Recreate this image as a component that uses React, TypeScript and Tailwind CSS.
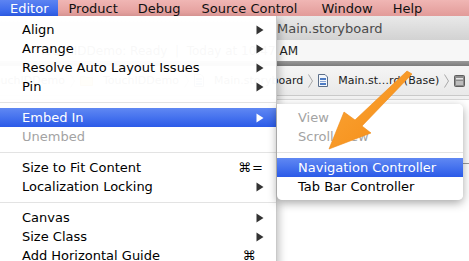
import React from "react";

type Item =
  | { kind: "item"; label: string; sub?: boolean; key?: string; on?: boolean; off?: boolean }
  | { kind: "sep" };

const EDITOR_MENU: Item[] = [
  { kind: "item", label: "Align", sub: true },
  { kind: "item", label: "Arrange", sub: true },
  { kind: "item", label: "Resolve Auto Layout Issues", sub: true },
  { kind: "item", label: "Pin", sub: true },
  { kind: "sep" },
  { kind: "item", label: "Embed In", sub: true, on: true },
  { kind: "item", label: "Unembed", off: true },
  { kind: "sep" },
  { kind: "item", label: "Size to Fit Content", key: "⌘=" },
  { kind: "item", label: "Localization Locking", sub: true },
  { kind: "sep" },
  { kind: "item", label: "Canvas", sub: true },
  { kind: "item", label: "Size Class", sub: true },
  { kind: "item", label: "Add Horizontal Guide", key: "⌘_" },
];

const EMBED_MENU: Item[] = [
  { kind: "item", label: "View", off: true },
  { kind: "item", label: "Scroll View", off: true },
  { kind: "sep" },
  { kind: "item", label: "Navigation Controller", on: true },
  { kind: "item", label: "Tab Bar Controller" },
];

const BAR = ["Editor", "Product", "Debug", "Source Control", "Window", "Help"];

function Tri({ white }: { white?: boolean }) {
  return (
    <svg width="8" height="10" viewBox="0 0 8 10" className="shrink-0">
      <path d="M0.5 0.5 L7.5 5 L0.5 9.5 Z" fill={white ? "#ffffff" : "#333333"} />
    </svg>
  );
}

function MenuRows({ items, pl }: { items: Item[]; pl: string }) {
  return (
    <>
      {items.map((it, i) =>
        it.kind === "sep" ? (
          <div key={i} className="h-[12px] flex items-center">
            <div className="h-px w-full bg-[#e3e3e3]" />
          </div>
        ) : (
          <div
            key={i}
            className={`h-[19px] flex items-center ${pl} pr-[12px] ${
              it.on ? "bg-gradient-to-b from-[#6088f3] to-[#2b5ae8] text-white" : it.off ? "text-[#a3a3a3]" : "text-black"
            }`}
          >
            <span className="flex-1 whitespace-nowrap">{it.label}</span>
            {it.sub && <Tri white={it.on} />}
            {it.key && <span className="whitespace-nowrap tracking-[1px]">{it.key}</span>}
          </div>
        )
      )}
    </>
  );
}

function FileIcon() {
  return (
    <svg width="10" height="13" viewBox="0 0 10 13" className="shrink-0">
      <path d="M0.5 0.5 H7 L9.5 3 V12.5 H0.5 Z" fill="#f4f7fb" stroke="#5c6f8a" />
      <rect x="2" y="4" width="6" height="2" fill="#4d7cc4" />
      <rect x="2" y="7" width="6" height="1" fill="#8aa6d6" />
      <rect x="2" y="9" width="6" height="2" fill="#4d7cc4" />
    </svg>
  );
}

function SceneIcon() {
  return (
    <svg width="11" height="12" viewBox="0 0 11 12" className="shrink-0">
      <rect x="0.5" y="0.5" width="10" height="11" rx="1" fill="#8c8c8c" stroke="#5e5e5e" />
      <rect x="2" y="3" width="7" height="1.5" fill="#e6e6e6" />
      <rect x="2" y="6" width="7" height="4" fill="#bdbdbd" />
    </svg>
  );
}

function FolderIcon() {
  return (
    <svg width="13" height="11" viewBox="0 0 13 11" className="shrink-0">
      <path d="M0.5 1.5 H5 L6 2.5 H12.5 V10.5 H0.5 Z" fill="#f2cf6a" stroke="#c99a2e" />
    </svg>
  );
}

function Crumb({ icon, label }: { icon?: React.ReactNode; label: string }) {
  return (
    <div className="flex items-center gap-[10px] shrink-0">
      {icon}
      <span className="shrink-0">{label}</span>
    </div>
  );
}

function Chev() {
  return (
    <svg width="5" height="14" viewBox="0 0 5 14" className="shrink-0 mx-[5px]">
      <path d="M0.5 0.5 L4.5 7 L0.5 13.5" fill="none" stroke="#a8a8a8" strokeWidth="1" />
    </svg>
  );
}

export default function App() {
  return (
    <div
      className="relative w-[469px] h-[261px] overflow-hidden bg-white text-[13px] leading-none"
      style={{ fontFamily: '"DejaVu Sans", "Liberation Sans", sans-serif' }}
    >
      {/* menu bar */}
      <div className="h-[16px] flex items-stretch bg-gradient-to-b from-[#f0b6b4] to-[#e29b99] text-[#111]">
        {BAR.map((b, i) => (
          <div
            key={b}
            className={`flex items-center px-[10px] whitespace-nowrap ${
              i === 0 ? "bg-gradient-to-b from-[#5d84f2] to-[#2e5de9] text-white" : ""
            } ${i === 3 ? "pl-[11px]" : ""} ${i === 4 ? "pl-[14px]" : ""}`}
          >
            {b}
          </div>
        ))}
      </div>

      {/* background Xcode window */}
      <div className="flex flex-col text-[12px]">
        <div className="h-[24px] flex items-center pl-[277px] bg-gradient-to-b from-[#e9e9e9] to-[#d2d2d2] text-[#4a4a4a] text-[13px]">
          Main.storyboard
        </div>
        <div className="h-[21px] flex items-center bg-[#f7f7f7] text-[#222]">
          <div className="w-[298px] text-right whitespace-nowrap">TouchIDDemo: Ready&nbsp;&nbsp;|&nbsp;&nbsp;Today at 10:47 AM</div>
        </div>
        <div className="h-[5px] bg-gradient-to-b from-[#9a9a9a] to-[#7c7c7c]" />
        <div className="h-[30px] flex items-center ml-[-11px] bg-gradient-to-b from-[#f5f5f5] to-[#e9e9e9] text-[11px] text-[#1b1b1b] whitespace-nowrap border-b border-[#c9c9c9] overflow-hidden">
          <Crumb label="TouchIDDemo" />
          <Chev />
          <Crumb icon={<FolderIcon />} label="TouchIDDemo" />
          <Chev />
          <Crumb icon={<FileIcon />} label="Main.storyboard" />
          <Chev />
          <Crumb icon={<FileIcon />} label="Main.st…rd (Base)" />
          <Chev />
          <Crumb icon={<SceneIcon />} label="View Controller Scene" />
        </div>
        <div className="h-[4px] bg-[#f1f1f1] border-b border-[#d8d8d8]" />
        <div className="flex-1 flex justify-end pt-[63px]">
          <div className="w-[8px] h-px bg-[#9a9a9a]" />
        </div>
      </div>

      {/* Editor menu */}
      <div className="absolute left-0 top-[16px] w-[277px] pt-[4px] pb-[4px] bg-white/[0.97] border-r border-[#c9c9c9] shadow-[2px_3px_8px_rgba(0,0,0,0.25)]">
        <MenuRows items={EDITOR_MENU} pl="pl-[22px]" />
      </div>

      {/* Embed In submenu */}
      <div className="absolute left-[277px] top-[104px] w-[186px] py-[4px] bg-white/[0.97] rounded-[5px] rounded-tl-none shadow-[0_3px_10px_rgba(0,0,0,0.35)]">
        <MenuRows items={EMBED_MENU} pl="pl-[21px]" />
      </div>

      {/* annotation arrow */}
      <svg className="absolute inset-0 pointer-events-none" width="469" height="261" viewBox="0 0 469 261">
        <defs>
          <linearGradient id="ar" x1="0" y1="0" x2="1" y2="1">
            <stop offset="0" stopColor="#fba73a" />
            <stop offset="1" stopColor="#f48a12" />
          </linearGradient>
        </defs>
        <polygon
          points="407,71 412,74 362,126 371,133 329,149 344,112 355,120"
          fill="url(#ar)"
          stroke="#ef8a16"
          strokeWidth="0.6"
          strokeLinejoin="round"
        />
      </svg>
    </div>
  );
}
